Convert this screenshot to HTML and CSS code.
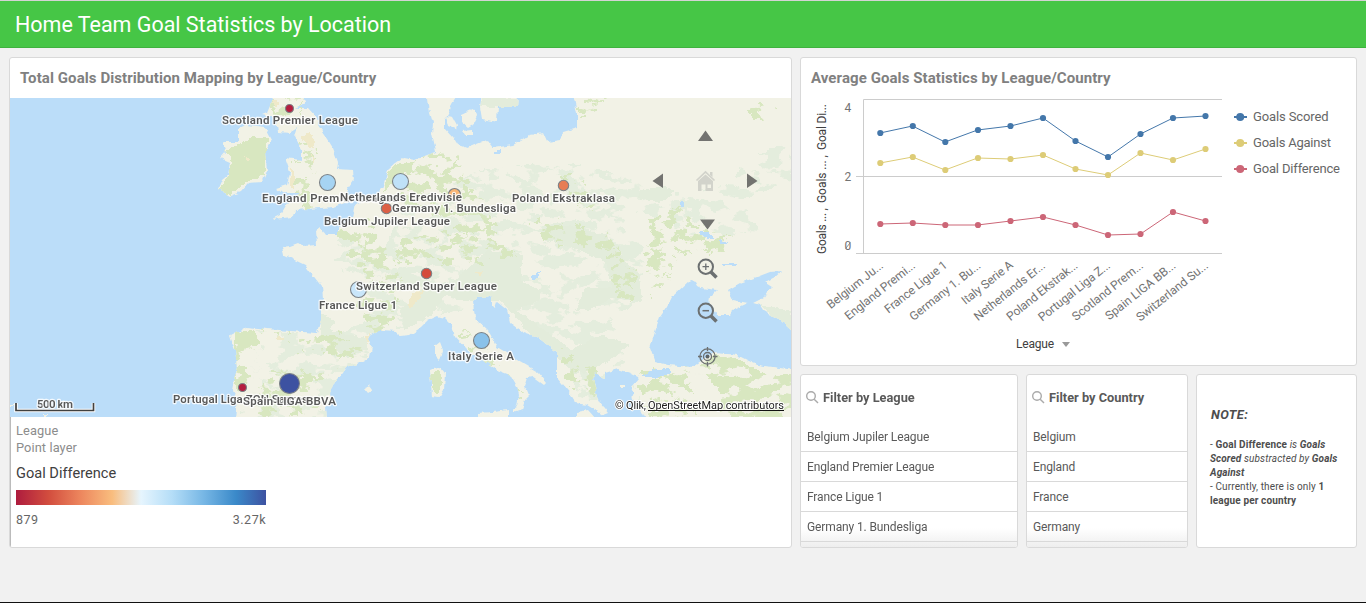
FILE: index.html
```html
<!DOCTYPE html>
<html lang="en">
<head>
<meta charset="utf-8">
<title>Home Team Goal Statistics by Location</title>
<link rel="stylesheet" href="styles.css">
</head>
<body>
<header class="topbar"><h1>Home Team Goal Statistics by Location</h1></header>
<main class="sheet">
  <section class="card map-card">
    <h2>Total Goals Distribution Mapping by League/Country</h2>
    <svg class="map" viewBox="10 98 781 319" width="781" height="319">
      <defs>
        <filter id="rough" x="-5%" y="-5%" width="110%" height="110%">
          <feTurbulence type="fractalNoise" baseFrequency="0.16" numOctaves="2" seed="4" result="n"/>
          <feDisplacementMap in="SourceGraphic" in2="n" scale="5" xChannelSelector="R" yChannelSelector="G"/>
        </filter>
        <filter id="ragged" filterUnits="userSpaceOnUse" x="10" y="98" width="781" height="319" color-interpolation-filters="sRGB">
          <feTurbulence type="fractalNoise" baseFrequency="0.08 0.12" numOctaves="3" seed="11" result="n"/>
          <feColorMatrix in="n" type="matrix" values="0 0 0 0 1  0 0 0 0 1  0 0 0 0 1  28 0 0 0 -14.4" result="m"/>
          <feDisplacementMap in="SourceGraphic" in2="n" scale="24" xChannelSelector="R" yChannelSelector="G" result="d"/>
          <feComposite in="d" in2="m" operator="in"/>
        </filter>
        <filter id="pale" filterUnits="userSpaceOnUse" x="10" y="98" width="781" height="319" color-interpolation-filters="sRGB">
          <feTurbulence type="fractalNoise" baseFrequency="0.05 0.09" numOctaves="3" seed="23" result="n"/>
          <feColorMatrix in="n" type="matrix" values="0 0 0 0 1  0 0 0 0 1  0 0 0 0 1  0 28 0 0 -14.2" result="m"/>
          <feComposite in="SourceGraphic" in2="m" operator="in"/>
        </filter>
        <clipPath id="land">
          <path id="coast" d="M428 98L430 113L433 123L432 133L436 152L427 155L415 160L403 158L396 163L388 170L386 177L382 188L373 197L355 203L352 218L338 227V234H325L320 227L316 230L317 245L303 246L298 243L290 246L282 247L284 255L305 265L315 278L322 287L323 298L321 303V320L317 333L290 331L267 329L247 327L230 336L235 350L237 367L232 390L237 397L235 420H327L326 407L333 403L330 393L333 385L343 373L347 367L360 363L370 357L372 347L368 338L380 330L397 331L400 336L410 335L420 328L428 320L437 316L445 318L452 325L455 337L467 350L483 360L497 370L510 375L517 387L519 395L517 405L513 413L522 410L525 400L530 395L528 390L524 387L527 378L532 377L543 385L546 382L538 372L517 360L507 353L497 347L488 330L475 318L473 302L478 297L488 297L492 295V305L495 308L497 302L507 310L510 322L523 332L537 337L557 352V378L567 390L573 397L575 403L587 405L603 415L608 413L600 403L597 397L593 378L595 373L605 380V373L618 369L630 373L640 378L632 387L635 393L630 397L637 403L645 420H795V370L780 368L757 365L737 355L713 353L692 367L667 365L655 362L650 348L655 332L660 317L667 307L672 297L690 280L697 282L700 288L718 290L713 295L707 300L712 305L717 315H730L733 310L748 303L733 300L728 290L740 283L757 277L770 272L782 271L775 277L765 282L773 287L767 292L763 298L753 303L760 305L763 310L780 320L795 334V94H573L577 113V128L563 132L560 140L547 142L543 133L530 135L513 145L493 148L487 140L467 148L458 145L453 137L445 128V120L450 110L452 103L458 94H428Z
          M275 94L267 113L262 115L276 118L278 132L290 133L298 127L295 137L302 150V160L285 158L290 172L287 185L277 188L283 193L300 193L287 203L280 215L272 219L283 218L293 217L295 210L333 207L348 202L347 190L354 180L353 170L337 169L338 162L333 148L328 140L318 125L317 118L308 108L295 108L305 103L303 94Z
          M238 128L247 125L265 127L272 140L265 153L267 170L262 182L248 183L240 192L230 196L218 189L222 180L228 175L230 162L221 158L226 152L222 142H238Z
          M482 94L480 107L482 119L497 122L498 107H517L518 94Z M462 114L475 108L477 116L473 124L468 127L462 122Z M446 117L453 118L457 125L456 129L448 126Z M462 131L472 130L472 135L465 135Z
          M435 346L440 342L443 350L440 361L435 356Z M430 371L440 367L445 373L444 390L439 398L432 397Z M477 413L493 412L508 410V420H477Z M364 388L370 386L373 390L368 393Z M621 384H625V387H621Z M577 412L588 410L597 420H577Z"/>
        </clipPath>
      </defs>
      <rect x="10" y="98" width="781" height="319" fill="#bbddf9"/>
      <g filter="url(#rough)" shape-rendering="crispEdges">
        <g clip-path="url(#land)">
          <rect x="5" y="94" width="790" height="326" fill="#f2f2e6"/>
          <g fill="#e4eddd" filter="url(#pale)">
            <path d="M575 98H791V140L745 160L730 185L665 195L640 180L600 170L560 160L480 170L440 190L405 200L380 260L345 230L330 250L370 320L335 335L250 330L240 417H330L380 335L440 315L500 300L560 350L580 400H640L610 320L640 300L645 250L620 225L640 210L700 240L760 230L740 200L791 180V98Z"/>
          </g>
          <g fill="#e3ecdb">
            <path d="M488 250L522 255L521 280L540 290L540 300L515 310L545 330L572 350L570 370L560 360L528 332L500 300L475 303L445 296L430 316L405 330L400 310L420 290L455 280Z"/>
            <path d="M545 228L570 226L605 235L620 255L640 275L643 302L612 298L590 310H575L585 288H612L605 262L580 250L545 240Z"/>
            <path d="M320 314L335 320L330 330L365 338L368 350L348 358L320 337Z M760 305L791 312V332Z"/>
            <path d="M570 350L600 335L630 345L610 360L590 372L570 375Z"/>
            <path d="M483 98H520V107H498L480 106Z M640 190L665 186L675 192L660 203L638 198Z"/>
          </g>
          <g fill="#d8e7c0">
            <path d="M238 145L252 137L268 138L264 175L247 182L230 195L218 190L228 176L232 158L225 150Z"/>
            <path d="M235 332L254 330L260 345L248 356L245 370L252 378L244 400L238 395L234 380Z"/>
            <path d="M388 172L396 165L408 162L403 180L390 185L383 192Z"/>
            <path d="M700 366L715 355L735 357L754 368L770 376L791 374V417H718L722 395Z"/>
            <path d="M430 375L438 370L443 378L438 395L433 392Z"/>
          </g>
          <g fill="#f2f2e6" filter="url(#pale)">
            <path d="M690 350H791V417H690Z M236 345H262V400H236Z"/>
          </g>
          <g fill="#d8e7c0" filter="url(#ragged)">
            <path d="M425 150L460 155L470 185L500 225L490 245L450 225L425 210L400 200L405 170Z"/>
            <path d="M405 235L480 235L520 255L470 262L425 258L395 265Z"/>
            <path d="M645 240L655 215L680 205L700 225L735 240L720 255L690 245L660 260Z"/>
            <path d="M645 242L660 222L685 215L700 232L715 250L680 246L665 258Z" transform="translate(4 4)"/>
            <path d="M565 175L585 180L600 200L595 215L575 200Z M530 220L570 225L620 240L625 255L550 240Z"/>
            <path d="M645 260L680 250L670 285L655 295Z M610 250L640 275L635 300L615 290Z"/>
            <path d="M335 230L375 225L405 280L390 340L370 335L360 300L370 280Z"/>
            <path d="M255 330L340 335L370 350L320 375L280 370L250 395L260 417L325 410L300 395L345 360L300 345Z"/>
            <path d="M560 350L600 370L600 395L575 390Z"/>
            <path d="M455 325L485 345L505 370L525 395L515 410L500 375L470 355Z M640 375L690 365L700 417H640Z"/>
            <path d="M570 98H610L590 115Z M750 105H780L760 120Z M270 98H305V120L278 120Z"/>
            <path d="M295 145L320 150L315 170L295 180L288 200L320 210L310 185Z"/>
          </g>
          <g fill="#efe9c9">
            <path d="M300 137L310 133L315 142L313 148L308 145Z M291 167L295 175L294 190L290 188Z M311 155L316 160L313 162Z M272 100L280 101L276 108Z"/>
            <path d="M412 293L425 290L418 301L411 309L407 305Z M364 337L370 335L368 345Z M475 272L485 272L480 276Z M245 156L250 158L247 162Z M276 337H284V340H277Z"/>
          </g>
          <g fill="#bbddf9">
            <path d="M641 377L650 370L670 368L671 373L656 378Z M700 231L708 232L714 238L708 240Z M720 240L728 242L727 245L720 244Z M680 201H684V208H681Z M721 264L737 263L736 266L722 266Z M531 275L541 271L538 277L532 279Z M494 151L502 149L500 154H495Z"/>
          </g>
        </g>
        <path d="M10 404L15 406H11Z M42 414L48 415L46 418Z" fill="#f2f2e6"/>
      </g>

      <g stroke="#7d8286" stroke-width="1.1">
        <circle cx="289.500" cy="108.500" r="4" fill="#b41d3f"/>
        <circle cx="327.500" cy="182.500" r="8" fill="#a6d4f3"/>
        <circle cx="400.500" cy="181.500" r="8" fill="#bfe1f8"/>
        <circle cx="454.500" cy="194.500" r="6" fill="#f9b675"/>
        <circle cx="386.500" cy="208.500" r="5.200" fill="#dc6046"/>
        <circle cx="563.500" cy="185.500" r="5.200" fill="#e77d55"/>
        <circle cx="426.500" cy="273.500" r="5.200" fill="#d54b3c"/>
        <circle cx="358.500" cy="289.500" r="8" fill="#c9e6fa"/>
        <circle cx="481.500" cy="340.500" r="8" fill="#8ac2ea"/>
        <circle cx="242.500" cy="387.500" r="4" fill="#b41d3f"/>
        <circle cx="289.500" cy="383.500" r="10" fill="#3d52a1"/>
      </g>
      <g class="place">
        <text x="222" y="124" textLength="136">Scotland Premier League</text>
        <text x="262" y="202" textLength="136">England Premier League</text>
        <text x="392" y="212" textLength="124">Germany 1. Bundesliga</text>
        <text x="340" y="201" textLength="122">Netherlands Eredivisie</text>
        <text x="324" y="225" textLength="126">Belgium Jupiler League</text>
        <text x="512" y="202" textLength="103">Poland Ekstraklasa</text>
        <text x="319" y="309" textLength="78">France Ligue 1</text>
        <text x="356" y="290" textLength="141">Switzerland Super League</text>
        <text x="448" y="360" textLength="66">Italy Serie A</text>
        <text x="173" y="403" textLength="135">Portugal Liga ZON Sagres</text>
        <text x="243" y="405" textLength="93">Spain LIGA BBVA</text>
        <text x="37" y="408" textLength="36">500 km</text>
      </g>
      <path d="M16 403V410.500H93.500V403" fill="none" stroke="#fff" stroke-width="3.500"/>
      <path d="M16 403V410.500H93.500V403" fill="none" stroke="#404040" stroke-width="1.700"/>
      <g class="credit">
        <text x="615" y="409" textLength="31">© Qlik,</text>
        <text x="648" y="409" textLength="136">OpenStreetMap contributors</text>
      </g>
      <path d="M648 410.500H784" stroke="#111"/>

      <g fill="#737370">
        <path d="M698 141L705.500 130.500L713 141Z M700 219.500H715L707.500 229.500Z M663 173.500V188L652.500 181Z M747 173.500V188L757.500 181Z"/>
      </g>
      <g fill="none" stroke="#6c7071" stroke-width="2">
        <circle cx="705.800" cy="266.700" r="7.200"/><path d="M711 272L716.500 277.500" stroke-width="3.600"/><path d="M702.500 266.700H709M705.800 263.500V270" stroke-width="1.300"/>
        <circle cx="705.800" cy="310.700" r="7.200"/><path d="M711 316L716.500 321.500" stroke-width="3.600"/><path d="M702.500 310.700H709" stroke-width="1.500"/>
        <circle cx="707.500" cy="356.500" r="7.600" stroke-width="1.300"/><circle cx="707.500" cy="356.500" r="4" stroke-width="1.300"/>
        <path d="M707.500 347V351M707.500 362V366.500M698 356.500H702M713 356.500H717.500" stroke-width="1.300"/>
      </g>
      <circle cx="707.500" cy="356.500" r="2" fill="#5d6264"/>
      <path d="M696.500 180.500L705.500 172L714.500 180.500" fill="none" stroke="#d2d3cb" stroke-width="1.700"/>
      <path fill="#d2d3cb" fill-rule="evenodd" d="M698 181L705.500 174.500L713 181V191H705.500V184.500H701.500V191H698Z M707.500 184.500V188H711V184.500Z M710 172H712.500V177L710 175Z"/>
    </svg>
    <div class="legend">
      <p class="muted">League</p>
      <p class="muted">Point layer</p>
      <p class="measure">Goal Difference</p>
      <div class="ramp"></div>
      <div class="range"><span>879</span><span>3.27k</span></div>
    </div>
  </section>

  <div class="side">
    <section class="card chart-card">
      <h2>Average Goals Statistics by League/Country</h2>
      <svg class="chart" viewBox="801 98 555 267" width="555" height="267">
        <path d="M863.500 253V99.500H1222M856 176.500H1222M856 253.500H1222" fill="none" stroke="#ccc"/>
        <g class="tick"><text x="844.500" y="112">4</text><text x="844.500" y="181">2</text><text x="844.500" y="250">0</text></g>
        <path d="M845.500 248.500L850.500 242.500" stroke="#737373" stroke-width=".8"/>
        <g class="ytitle" transform="translate(826 254) rotate(-90)">
          <text x="0" y="0" textLength="46">Goals ... ,</text><text x="51" y="0" textLength="48">Goals ... ,</text><text x="104" y="0" textLength="46">Goal Di...</text>
        </g>
        <g stroke="#4477aa" fill="#4477aa">
          <polyline fill="none" points="880,133 912.500,126 945,142 977.500,130 1010.500,126 1043,118 1075.500,141 1108,157 1140.500,134 1173,118 1205.500,116"/>
          <g stroke="none"><circle cx="880.300" cy="133" r="3.100"/><circle cx="912.800" cy="126" r="3.100"/><circle cx="945.300" cy="142" r="3.100"/><circle cx="978" cy="130" r="3.100"/><circle cx="1010.500" cy="126" r="3.100"/><circle cx="1043" cy="118" r="3.100"/><circle cx="1075.500" cy="141" r="3.100"/><circle cx="1108" cy="157" r="3.100"/><circle cx="1140.500" cy="134" r="3.100"/><circle cx="1173" cy="118" r="3.100"/><circle cx="1205.500" cy="116" r="3.100"/></g>
        </g>
        <g stroke="#ddcc77" fill="#ddcc77">
          <polyline fill="none" points="880,163 912.500,157 945,170 977.500,158 1010.500,159 1043,155 1075.500,169 1108,175 1140.500,153 1173,160 1205.500,149"/>
          <g stroke="none"><circle cx="880.300" cy="163" r="3.100"/><circle cx="912.800" cy="157" r="3.100"/><circle cx="945.300" cy="170" r="3.100"/><circle cx="978" cy="158" r="3.100"/><circle cx="1010.500" cy="159" r="3.100"/><circle cx="1043" cy="155" r="3.100"/><circle cx="1075.500" cy="169" r="3.100"/><circle cx="1108" cy="175" r="3.100"/><circle cx="1140.500" cy="153" r="3.100"/><circle cx="1173" cy="160" r="3.100"/><circle cx="1205.500" cy="149" r="3.100"/></g>
        </g>
        <g stroke="#cc6677" fill="#cc6677">
          <polyline fill="none" points="880,224 912.500,223 945,225 977.500,225 1010.500,221 1043,217 1075.500,225 1108,235 1140.500,234 1173,212 1205.500,221"/>
          <g stroke="none"><circle cx="880.300" cy="224" r="3.100"/><circle cx="912.800" cy="223" r="3.100"/><circle cx="945.300" cy="225" r="3.100"/><circle cx="978" cy="225" r="3.100"/><circle cx="1010.500" cy="221" r="3.100"/><circle cx="1043" cy="217" r="3.100"/><circle cx="1075.500" cy="225" r="3.100"/><circle cx="1108" cy="235" r="3.100"/><circle cx="1140.500" cy="234" r="3.100"/><circle cx="1173" cy="212" r="3.100"/><circle cx="1205.500" cy="221" r="3.100"/></g>
        </g>
        <g class="xlabel">
          <text transform="translate(884 267) rotate(-38.500)" textLength="68">Belgium Ju...</text>
          <text transform="translate(916 267) rotate(-38.500)" textLength="86">England Premi...</text>
          <text transform="translate(948 266.500) rotate(-38.500)" textLength="76">France Ligue 1</text>
          <text transform="translate(981.500 267) rotate(-38.500)" textLength="87">Germany 1. Bu...</text>
          <text transform="translate(1014 266.500) rotate(-38.500)" textLength="62">Italy Serie A</text>
          <text transform="translate(1046 267) rotate(-38.500)" textLength="87">Netherlands Er...</text>
          <text transform="translate(1078.500 267) rotate(-38.500)" textLength="87">Poland Ekstrak...</text>
          <text transform="translate(1111 267) rotate(-38.500)" textLength="88">Portugal Liga Z...</text>
          <text transform="translate(1144 267) rotate(-38.500)" textLength="87">Scotland Prem...</text>
          <text transform="translate(1176.500 267) rotate(-38.500)" textLength="86">Spain LIGA BB...</text>
          <text transform="translate(1209 267) rotate(-38.500)" textLength="88">Switzerland Su...</text>
        </g>
        <text class="dim" x="1016" y="348" textLength="38">League</text>
        <path d="M1062 342H1070L1066 347Z" fill="#999"/>
        <path d="M1234 117H1247" stroke="#4477aa" stroke-width="2"/><circle cx="1240.200" cy="117" r="4" fill="#4477aa"/>
        <path d="M1234 143H1247" stroke="#ddcc77" stroke-width="2"/><circle cx="1240.200" cy="143" r="4" fill="#ddcc77"/>
        <path d="M1234 169H1247" stroke="#cc6677" stroke-width="2"/><circle cx="1240.200" cy="169" r="4" fill="#cc6677"/>
        <g class="key">
          <text x="1253" y="121" textLength="75.500">Goals Scored</text>
          <text x="1253" y="147" textLength="78">Goals Against</text>
          <text x="1253" y="173" textLength="87">Goal Difference</text>
        </g>
      </svg>
    </section>
    <div class="row">
      <section class="card filter">
        <h3><svg width="13" height="13" viewBox="0 0 13 13"><circle cx="5" cy="5" r="4.300"/><path d="M8.200 8.200L12 12"/></svg>Filter by League</h3>
        <ul><li>Belgium Jupiler League</li><li>England Premier League</li><li>France Ligue 1</li><li>Germany 1. Bundesliga</li></ul>
      </section>
      <section class="card filter">
        <h3><svg width="13" height="13" viewBox="0 0 13 13"><circle cx="5" cy="5" r="4.300"/><path d="M8.200 8.200L12 12"/></svg>Filter by Country</h3>
        <ul><li>Belgium</li><li>England</li><li>France</li><li>Germany</li></ul>
      </section>
      <section class="card note">
        <h3>NOTE:</h3>
        <p>- <b>Goal Difference</b> <i>is <b>Goals</b></i><br><i><b>Scored</b> substracted by <b>Goals</b></i><br><i><b>Against</b></i><br>- Currently, there is only <b>1</b><br><b>league per country</b></p>
      </section>
    </div>
  </div>
</main>
</body>
</html>
```
FILE: styles.css
```css
* { box-sizing: border-box; }
body {
  margin: 0;
  height: 603px;
  overflow: hidden;
  display: flex;
  flex-direction: column;
  background: #f1f1f1;
  border-bottom: 1px solid #111;
  color: #595959;
  font-family: Roboto, "Liberation Sans", sans-serif;
}
h1, h2, h3, p, ul { margin: 0; padding: 0; font-weight: normal; }
.topbar {
  height: 48px;
  flex: none;
  padding-left: 15px;
  background: #46c646;
  border-top: 1px solid #d4d4d4;
  border-bottom: 1px solid #3fb23f;
}
.topbar h1 { font-size: 21.5px; line-height: 47px; letter-spacing: -.01px; color: #fff; white-space: nowrap; }
.sheet { display: flex; gap: 8px; padding: 9px 9px 0; }
.card { background: #fff; border: 1px solid #d9d9d9; border-radius: 3px; overflow: hidden; }
.card h2 {
  height: 40px;
  padding-left: 10px;
  font-size: 15px;
  font-weight: bold;
  line-height: 40px;
  letter-spacing: .08px;
  color: #808080;
  white-space: nowrap;
}
.map-card { width: 783px; height: 491px; }
.map, .chart { display: block; }
.place text {
  font-size: 11.5px;
  font-weight: 600;
  fill: #595959;
  stroke: #fff;
  stroke-width: 2.4px;
  stroke-linejoin: round;
  stroke-opacity: .85;
  paint-order: stroke;
}
.credit text { font-size: 11px; fill: #222; stroke: #fff; stroke-width: 2px; paint-order: stroke; }
.legend { padding: 5px 6px; border-left: 1px solid #bbb; height: 130px; padding-left: 5px; }
.muted { font-size: 12.8px; line-height: 17px; color: #8c8c8c; letter-spacing: .1px; }
.measure { margin-top: 7px; font-size: 14.6px; line-height: 20px; color: #404040; }
.ramp {
  width: 250px;
  height: 15px;
  margin-top: 7px;
  background: linear-gradient(90deg, #ae1c3e, #d24d3e 13%, #ed875e 26%, #f9bd7e 38.5%, #e6f5fe 50%, #b4ddf7 62.5%, #77b7e5 75%, #3a89c9 88%, #3d52a1);
}
.range { display: flex; justify-content: space-between; width: 250px; margin-top: 6px; font-size: 12.5px; line-height: 18px; letter-spacing: .5px; color: #666; }
.side { display: flex; flex-direction: column; gap: 8px; width: 557px; }
.chart-card { height: 309px; }
.tick text { font-size: 12px; fill: #737373; }
.ytitle text { font-size: 12px; fill: #404040; }
.xlabel text { font-size: 12px; fill: #737373; text-anchor: end; }
.dim { font-size: 12px; fill: #404040; }
.key text { font-size: 13px; fill: #666; }
.row { display: grid; grid-template-columns: 218px 162px 161px; gap: 8px; height: 174px; }
.filter h3 {
  display: flex;
  align-items: center;
  gap: 4px;
  height: 45px;
  margin-bottom: 2px;
  padding-left: 5px;
  font-size: 12.8px;
  font-weight: bold;
  color: #595959;
  white-space: nowrap;
}
.filter h3 svg { fill: none; stroke: #aaa; stroke-width: 1.4; }
.filter ul { list-style: none; height: 125px; background: linear-gradient(#fff 85%, #eee); }
.filter li { height: 30px; padding-left: 6px; border-bottom: 1px solid #d9d9d9; font-size: 12px; line-height: 31px; letter-spacing: -.12px; white-space: nowrap; }
.note { padding: 31px 0 0 13px; color: #4d4d4d; white-space: nowrap; }
.note h3 { padding-left: 1px; font-size: 12.8px; line-height: 17px; font-weight: bold; font-style: italic; letter-spacing: .4px; }
.note p { margin-top: 15px; font-size: 10px; line-height: 14px; letter-spacing: .12px; }
```
